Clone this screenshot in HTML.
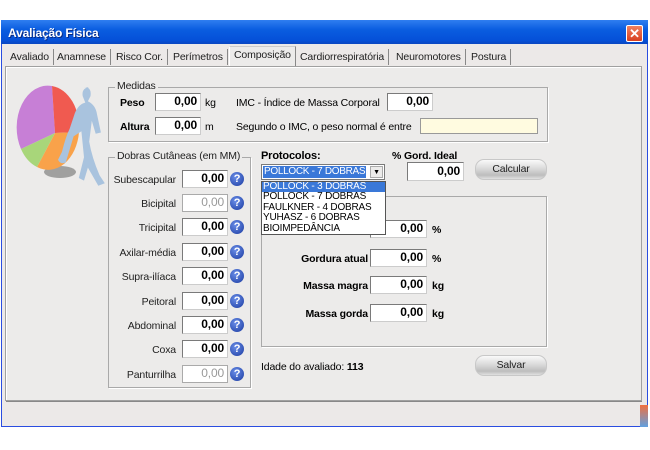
<!DOCTYPE html>
<html><head><meta charset="utf-8"><style>
*{margin:0;padding:0;box-sizing:border-box}
body{width:650px;height:450px;background:#fff;position:relative;overflow:hidden;font-family:"Liberation Sans",sans-serif;font-size:10.5px;letter-spacing:-0.15px;color:#000}
.a{position:absolute;white-space:nowrap}
.win{left:1px;top:20px;width:647px;height:407px;background:#ece9e8;border:1px solid #2a4de0;border-top:none}
.title{left:1px;top:20px;width:647px;height:24px;background:linear-gradient(#2f7ef0,#0a5de0 40%,#0550d8 85%,#0a46c0);color:#fff;font-weight:bold;font-size:12px;padding:6px 0 0 7px;text-shadow:1px 1px #0a2a80}
.x{left:626px;top:25px;width:17px;height:17px;background:linear-gradient(#f08060,#d84020);border:1px solid #fff;border-radius:2px;color:#fff;font-weight:bold;font-size:13px;text-align:center;line-height:15px}
.tab{top:49px;height:16px;font-size:10.5px;color:#222;padding:0 4px;border-right:1px solid #888;line-height:16px}
.panel{left:5px;top:66px;width:637px;height:335px;border:1px solid #a0a0a0;box-shadow:inset 1px 1px #fff;background:#ecebea}
.fs{border:1px solid #a9a9a9;box-shadow:1px 1px #fff}
.lg{background:#ecebea;padding:0 2px;color:#222}
.in{background:#fff;border:1px solid #7a7a7a;border-right-color:#ccc;border-bottom-color:#ccc;text-align:right;font-weight:bold;font-size:12px;padding-right:3px;line-height:15px}
.dis{color:#999;font-weight:normal;border-color:#aaa}
.lb{text-align:right;width:70px;left:106px;color:#222}
.q{width:14px;height:14px;border-radius:50%;background:radial-gradient(circle at 40% 35%,#6a8ee8,#1a3aa0);color:#fff;font-weight:bold;font-size:11px;text-align:center;line-height:14px;left:230px}
.b{font-weight:bold}
.btn{width:72px;height:21px;border-radius:9px;background:linear-gradient(#fafafa,#d6d6d6 50%,#bdbdbd 80%,#e0e0e0);border:1px solid #c8c8c8;text-align:center;line-height:19px;font-size:10.5px;color:#222}
.rl{text-align:right;width:110px;left:258px;font-weight:bold}
</style></head><body>
<div class="a win"></div>
<div class="a title">Avaliação Física</div>
<div class="a x">✕</div>
<div class="a tab" style="left:6px">Avaliado</div>
<div class="a tab" style="left:53px">Anamnese</div>
<div class="a tab" style="left:112px">Risco Cor.</div>
<div class="a tab" style="left:169px">Perímetros</div>
<div class="a tab" style="left:229px;top:46px;height:20px;background:#ecebea;border-top:1px solid #ccc;border-left:1px solid #fff">Composição</div>
<div class="a tab" style="left:296px">Cardiorrespiratória</div>
<div class="a tab" style="left:392px">Neuromotores</div>
<div class="a tab" style="left:467px">Postura</div>
<div class="a panel"></div>
<div class="a" style="left:6px;top:401px;width:636px;height:1px;background:#888"></div>
<svg class="a" style="left:0;top:70px" width="110" height="130" viewBox="0 0 110 130">
<ellipse cx="60" cy="102" rx="16" ry="6" fill="#444" opacity=".45"/>
<path d="M55 63 L52 16 A31 42 0 0 0 21 79 Z" fill="#c77fd6"/>
<path d="M55 63 L52 16 A31 42 0 0 1 79 62 Z" fill="#f05a50"/>
<path d="M55 63 L79 62 A31 42 0 0 1 37 97 Z" fill="#f9a24a"/>
<path d="M55 63 L37 97 A31 42 0 0 1 21 79 Z" fill="#a8d67a"/>
<g transform="translate(58,17) scale(1.3)">
<path d="M20 0 q6 0 5 7 l-2 4 q6 3 7 10 l3 14 -4 1 -3-10 -2 16 q2 12 8 26 l4 6 -5 2 -8-14 -3 10 -4-2 4-16 -2-20 -6 4 -6 20 q-4 2-6-2 l3-6 q3-12 6-18 l4-12 q3-7 8-8 l-2-5 q-1-6 5-7z" fill="#a9c3de"/>
</g>
</svg>
<div class="a fs" style="left:108px;top:87px;width:440px;height:55px"></div>
<div class="a lg" style="left:115px;top:80px">Medidas</div>
<div class="a b" style="left:120px;top:97px">Peso</div>
<div class="a in" style="left:155px;top:93px;width:46px;height:18px">0,00</div>
<div class="a" style="left:205px;top:97px">kg</div>
<div class="a" style="left:236px;top:97px">IMC - Índice de Massa Corporal</div>
<div class="a in" style="left:387px;top:93px;width:46px;height:18px">0,00</div>
<div class="a b" style="left:120px;top:121px">Altura</div>
<div class="a in" style="left:155px;top:117px;width:46px;height:18px">0,00</div>
<div class="a" style="left:205px;top:121px">m</div>
<div class="a" style="left:236px;top:121px">Segundo o IMC, o peso normal é entre</div>
<div class="a" style="left:420px;top:118px;width:118px;height:16px;background:#fffbe0;border:1px solid #999"></div>
<div class="a fs" style="left:108px;top:157px;width:143px;height:231px"></div>
<div class="a lg" style="left:115px;top:150px">Dobras Cutâneas (em MM)</div>
<div class="a lb" style="top:174px">Subescapular</div><div class="a in" style="left:182px;top:170px;width:46px;height:18px">0,00</div><div class="a q" style="top:172px">?</div>
<div class="a lb" style="top:198px">Bicipital</div><div class="a in dis" style="left:182px;top:194px;width:46px;height:18px">0,00</div><div class="a q" style="top:196px">?</div>
<div class="a lb" style="top:222px">Tricipital</div><div class="a in" style="left:182px;top:218px;width:46px;height:18px">0,00</div><div class="a q" style="top:220px">?</div>
<div class="a lb" style="top:247px">Axilar-média</div><div class="a in" style="left:182px;top:243px;width:46px;height:18px">0,00</div><div class="a q" style="top:245px">?</div>
<div class="a lb" style="top:271px">Supra-ilíaca</div><div class="a in" style="left:182px;top:267px;width:46px;height:18px">0,00</div><div class="a q" style="top:269px">?</div>
<div class="a lb" style="top:296px">Peitoral</div><div class="a in" style="left:182px;top:292px;width:46px;height:18px">0,00</div><div class="a q" style="top:294px">?</div>
<div class="a lb" style="top:320px">Abdominal</div><div class="a in" style="left:182px;top:316px;width:46px;height:18px">0,00</div><div class="a q" style="top:318px">?</div>
<div class="a lb" style="top:344px">Coxa</div><div class="a in" style="left:182px;top:340px;width:46px;height:18px">0,00</div><div class="a q" style="top:342px">?</div>
<div class="a lb" style="top:369px">Panturrilha</div><div class="a in dis" style="left:182px;top:365px;width:46px;height:18px">0,00</div><div class="a q" style="top:367px">?</div>
<div class="a b" style="left:261px;top:150px;font-size:11px">Protocolos:</div>
<div class="a b" style="left:392px;top:150px">% Gord. Ideal</div>
<div class="a" style="left:261px;top:164px;width:124px;height:16px;background:#fff;border:1px solid #7a7a7a"></div>
<div class="a" style="left:263px;top:166px;height:12px;background:#3a78d8;color:#fff;padding:0 1px;line-height:12px;font-size:10px;letter-spacing:-0.3px">POLLOCK - 7 DOBRAS</div>
<div class="a" style="left:370px;top:166px;width:13px;height:12px;background:#ecebea;border:1px solid #aaa;font-size:7px;text-align:center;line-height:11px">▼</div>
<div class="a in" style="left:407px;top:162px;width:57px;height:19px;line-height:17px">0,00</div>
<div class="a btn" style="left:475px;top:159px">Calcular</div>
<div class="a" style="left:261px;top:196px;width:286px;height:151px;border:1px solid #a9a9a9;box-shadow:1px 1px #fff"></div>
<div class="a in" style="left:370px;top:220px;width:57px;height:18px">0,00</div><div class="a b" style="left:432px;top:224px">%</div>
<div class="a rl" style="top:253px">Gordura atual</div><div class="a in" style="left:370px;top:249px;width:57px;height:18px">0,00</div><div class="a b" style="left:432px;top:253px">%</div>
<div class="a rl" style="top:280px">Massa magra</div><div class="a in" style="left:370px;top:276px;width:57px;height:18px">0,00</div><div class="a b" style="left:432px;top:280px">kg</div>
<div class="a rl" style="top:308px">Massa gorda</div><div class="a in" style="left:370px;top:304px;width:57px;height:18px">0,00</div><div class="a b" style="left:432px;top:308px">kg</div>
<div class="a" style="left:261px;top:181px;width:125px;height:54px;background:#fff;border:1px solid #555;font-size:10px;line-height:10.4px;letter-spacing:-0.2px">
<div style="background:#3a78d8;color:#fff;padding-left:1px">POLLOCK - 3 DOBRAS</div>
<div style="padding-left:1px">POLLOCK - 7 DOBRAS</div>
<div style="padding-left:1px">FAULKNER - 4 DOBRAS</div>
<div style="padding-left:1px">YUHASZ - 6 DOBRAS</div>
<div style="padding-left:1px">BIOIMPEDÂNCIA</div>
</div>
<div class="a" style="left:261px;top:361px">Idade do avaliado: <b>113</b></div>
<div class="a btn" style="left:475px;top:355px">Salvar</div>
<div class="a" style="left:640px;top:405px;width:8px;height:22px;background:linear-gradient(#f07040,#60a0e0)"></div>
</body></html>
